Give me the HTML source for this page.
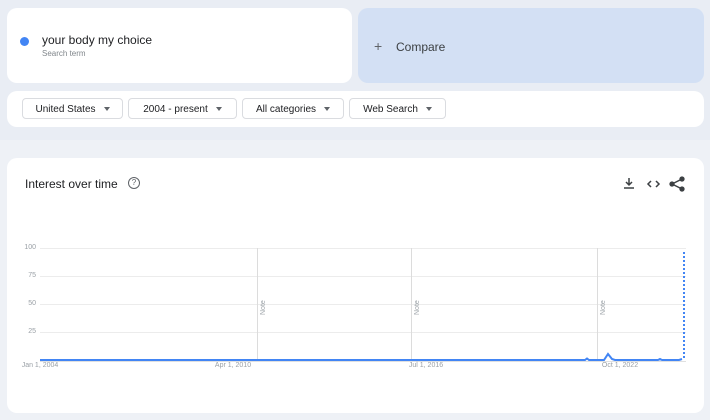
<!DOCTYPE html>
<html><head><style>
body{margin:0;width:710px;height:420px;background:#e9edf4;font-family:"Liberation Sans",sans-serif;position:relative;overflow:hidden}
.c{position:absolute;background:#fff;border-radius:10px}
.chip{position:absolute;top:98px;height:21px;border:1px solid #dadce0;border-radius:4px;font-size:10px;color:#202124;line-height:21px;text-align:center;box-sizing:border-box}
.chip:after{content:"";display:inline-block;margin-left:8px;border-left:3.5px solid transparent;border-right:3.5px solid transparent;border-top:4px solid #5f6368;vertical-align:middle}
.yl{position:absolute;font-size:7px;color:#9aa0a6;right:674px}
.xl{position:absolute;font-size:7px;color:#9aa0a6;top:362px;transform:translateX(-50%)}
</style></head><body>
<div class="c" style="left:7px;top:8px;width:345px;height:75px"></div>
<div style="position:absolute;left:20px;top:37px;width:9px;height:9px;border-radius:50%;background:#4285f4"></div>
<div style="position:absolute;left:42px;top:33px;font-size:12px;color:#202124">your body my choice</div>
<div style="position:absolute;left:42px;top:49px;font-size:8px;color:#80868b">Search term</div>
<div class="c" style="left:358px;top:8px;width:346px;height:75px;background:#d3e0f4"></div>
<div style="position:absolute;left:374px;top:38px;font-size:14px;color:#5f6368">+</div>
<div style="position:absolute;left:396px;top:40px;font-size:12px;color:#3c4043">Compare</div>
<div class="c" style="left:7px;top:91px;width:697px;height:36px"></div>
<div class="chip" style="left:22px;width:101px">United States</div>
<div class="chip" style="left:128px;width:109px">2004 - present</div>
<div class="chip" style="left:242px;width:102px">All categories</div>
<div class="chip" style="left:349px;width:97px">Web Search</div>
<div style="position:absolute;left:0;top:140px;width:710px;height:280px;background:#eef1f6"></div>
<div class="c" style="left:7px;top:158px;width:697px;height:255px"></div>
<div style="position:absolute;left:25px;top:177px;font-size:12px;color:#202124">Interest over time</div>
<div style="position:absolute;left:128px;top:177px;width:10px;height:10px;border:1.3px solid #5f6368;border-radius:50%;font-size:8px;line-height:10px;text-align:center;color:#5f6368">?</div>
<svg style="position:absolute;left:620px;top:176px" width="70" height="16" viewBox="0 0 70 16" fill="none" stroke="#3c4043" stroke-width="1.5">
<path d="M9 2v7M6 6l3 3 3-3M4 12h10"/>
<path d="M31 5l-3 3 3 3M36 5l3 3-3 3"/>
<circle cx="52" cy="8" r="1.9" fill="#3c4043"/><circle cx="62" cy="3" r="1.9" fill="#3c4043"/><circle cx="62" cy="13" r="1.9" fill="#3c4043"/>
<path d="M52 8l10-5M52 8l10 5"/>
</svg>
<svg style="position:absolute;left:0;top:0" width="710" height="420">
<g stroke="#ececec" stroke-width="1"><path d="M40 248.5H686M40 276.5H686M40 304.5H686M40 332.5H686"/></g>
<g stroke="#dcdcdc"><path d="M257.5 248V360M411.5 248V360M597.5 248V360"/></g>
<g font-size="7" fill="#9aa0a6" font-family="Liberation Sans"><text transform="translate(265 315) rotate(-90)">Note</text><text transform="translate(419 315) rotate(-90)">Note</text><text transform="translate(605 315) rotate(-90)">Note</text></g>
<path d="M40 360H585l2-1.5 2 1.5H604l4-6 4 5 3 1H658l2-1 2 1H679l3-1" stroke="#4285f4" stroke-width="2" fill="none"/>
<path d="M684 358V250" stroke="#4285f4" stroke-width="2" stroke-dasharray="2 2"/>
<path d="M40 361.5H686" stroke="#e0e0e0"/>
</svg>
<div class="yl" style="top:244px">100</div><div class="yl" style="top:272px">75</div><div class="yl" style="top:300px">50</div><div class="yl" style="top:328px">25</div>
<div class="xl" style="left:40px">Jan 1, 2004</div><div class="xl" style="left:233px">Apr 1, 2010</div><div class="xl" style="left:426px">Jul 1, 2016</div><div class="xl" style="left:620px">Oct 1, 2022</div>
</body></html>
